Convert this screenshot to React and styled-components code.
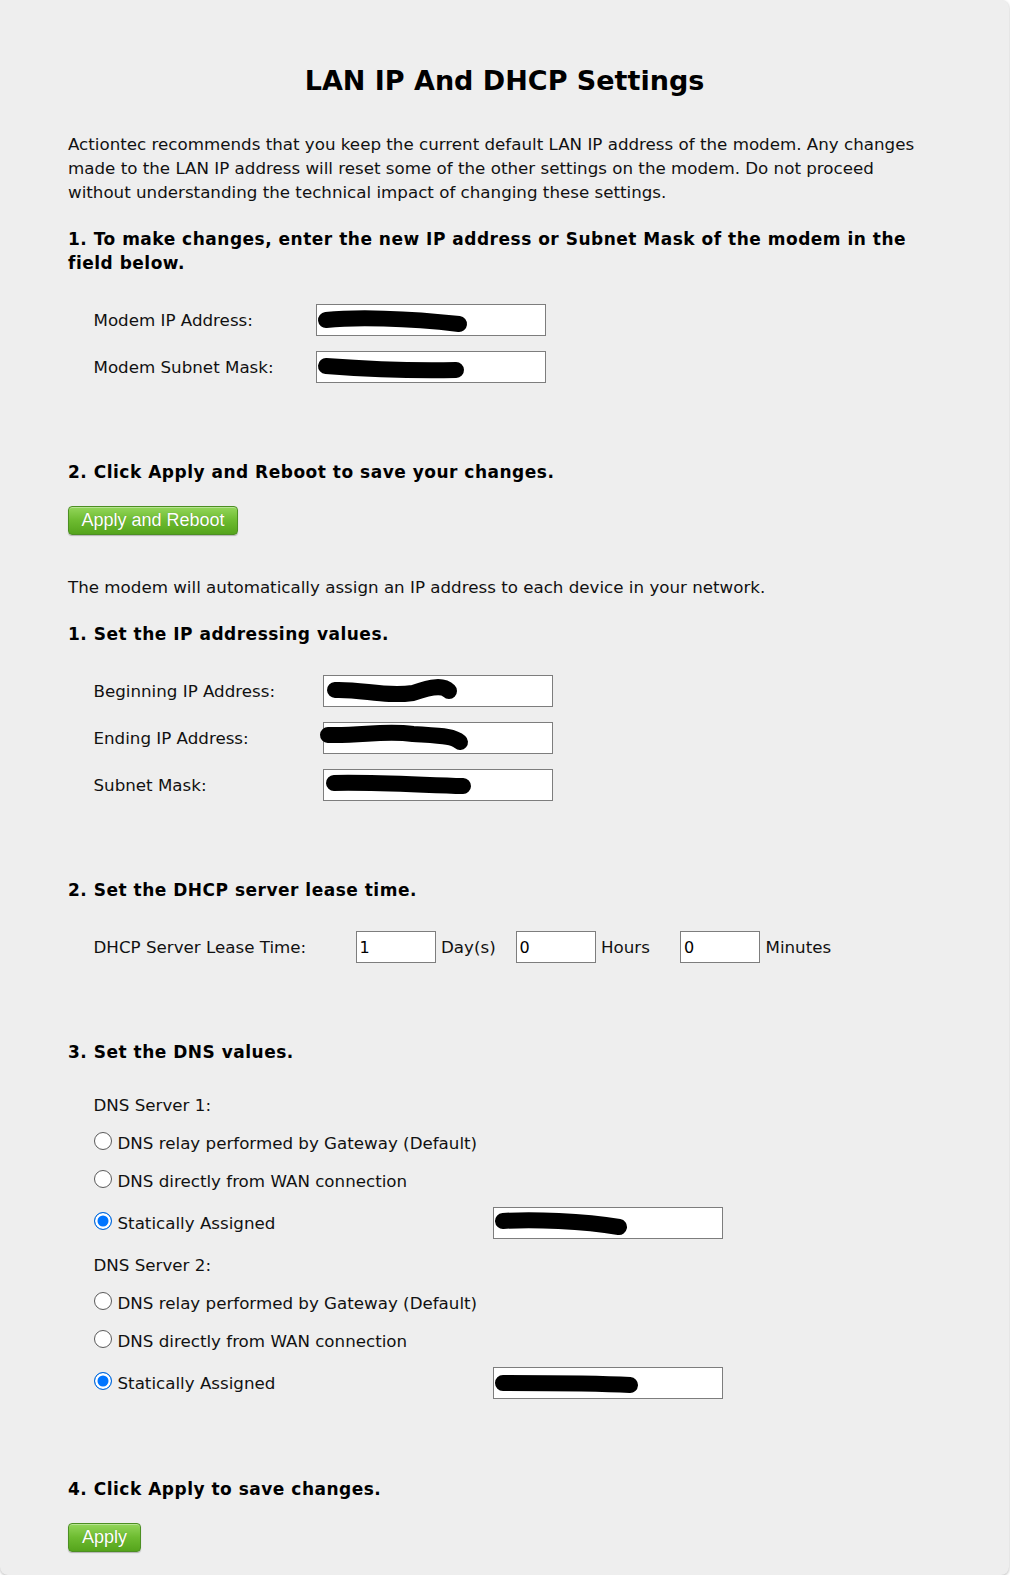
import styled, { createGlobalStyle } from 'styled-components'

const GlobalStyle = createGlobalStyle`
  body {
    margin: 0;
    background: #ffffff;
    font-family: "DejaVu Sans", Verdana, sans-serif;
  }
`

const Panel = styled.div`
  width: 1009px;
  box-sizing: border-box;
  padding: 65px 68px 23px 68px;
  background: #eeeeee;
  border-radius: 0 8px 8px 8px;
  box-shadow: 0 1px 3px rgba(0, 0, 0, 0.28);
  color: #111;
  font-size: 16.7px;
  line-height: 24px;
`

const Title = styled.h1`
  margin: 0;
  text-align: center;
  font-size: 27px;
  line-height: 32px;
  font-weight: bold;
  color: #000;
`

const Text = styled.p`
  max-width: 850px;
  margin: ${(props) => props.$top}px 0 0;
`

const StepHeading = styled.h3`
  max-width: 850px;
  margin: ${(props) => props.$top}px 0 0;
  font-size: 17px;
  letter-spacing: 0.5px;
  line-height: 24px;
  font-weight: bold;
  color: #000;
`

const FormGrid = styled.div`
  display: grid;
  grid-template-columns: ${(props) => props.$label}px 230px;
  row-gap: 15px;
  align-items: center;
  margin-top: ${(props) => props.$top}px;
  padding-left: 25.5px;
`

const FieldBox = styled.div`
  position: relative;
  width: ${(props) => props.$w || 230}px;
  height: 32px;
`

const Input = styled.input`
  width: 100%;
  height: 100%;
  box-sizing: border-box;
  margin: 0;
  padding: 0 3px;
  border: 1px solid #7d7d7d;
  background: #fff;
  font-family: "DejaVu Sans", Verdana, sans-serif;
  font-size: 16px;
  color: #000;
  outline: none;
`

const Scribble = styled.svg`
  position: absolute;
  top: 0;
  left: 0;
  pointer-events: none;
  overflow: visible;
`

const GreenButton = styled.button`
  display: block;
  margin-top: ${(props) => props.$top}px;
  height: 29px;
  padding: 0 ${(props) => props.$pad}px;
  border: 1px solid #4c8f22;
  border-radius: 4px;
  background: linear-gradient(to bottom, #93d65a 0%, #6dbb30 50%, #55a41c 100%);
  box-shadow: inset 0 1px 0 rgba(255, 255, 255, 0.35), 0 1px 1px rgba(0, 0, 0, 0.25);
  color: #fff;
  font-family: "Liberation Sans", Arial, sans-serif;
  font-size: 18px;
  line-height: 27px;
  text-shadow: 0 0 1px rgba(0, 0, 0, 0.25);
  cursor: pointer;
`

const LeaseRow = styled.div`
  display: flex;
  align-items: center;
  margin-top: ${(props) => props.$top}px;
  padding-left: 25.5px;
`

const LeaseLabel = styled.span`
  width: 262px;
`

const Unit = styled.span`
  box-sizing: border-box;
  width: ${(props) => props.$w}px;
  padding-left: 5.5px;
`

const DnsList = styled.div`
  display: flex;
  flex-direction: column;
  gap: 14px;
  margin-top: ${(props) => props.$top}px;
  padding-left: 25.5px;
`

const DnsLabel = styled.div`
  line-height: 24px;
`

const RadioRow = styled.label`
  display: flex;
  align-items: center;
  min-height: 24px;
`

const RadioText = styled.span`
  width: ${(props) => (props.$w ? `${props.$w}px` : 'auto')};
`

const Radio = styled.input.attrs({ type: 'radio' })`
  appearance: none;
  -webkit-appearance: none;
  box-sizing: border-box;
  width: 18px;
  height: 18px;
  margin: -5px 6px 0 0;
  border: 1px solid #5a5a5a;
  border-radius: 50%;
  background: #fff;
  flex: none;

  &:checked {
    border: 1.5px solid #0067d8;
    background: #0075ff;
    box-shadow: inset 0 0 0 2.5px #fff;
  }
`

function Redacted({ value, w = 230, blob }) {
  return (
    <FieldBox $w={w}>
      <Input type="text" defaultValue={value || ''} />
      {blob && (
        <Scribble width={w} height="32" viewBox={`0 0 ${w} 32`}>
          <path
            d={blob}
            fill="none"
            stroke="#000"
            strokeWidth="16"
            strokeLinecap="round"
            strokeLinejoin="round"
          />
        </Scribble>
      )}
    </FieldBox>
  )
}

const blobs = {
  modemIp: 'M10 16 C 40 13, 90 14, 143 20',
  modemMask: 'M10 15 C 50 18, 100 20, 140 19',
  begin: 'M12 15 C 40 14, 60 22, 90 18 C 110 11, 120 10, 126 16',
  end: 'M5 13 C 40 14, 60 8, 90 12 C 120 14, 130 14, 137 20',
  mask: 'M11 14 C 50 13, 100 16, 140 17',
  dns1: 'M10 14 C 40 12, 90 14, 126 20',
  dns2: 'M10 16 C 50 16, 100 16, 137 18',
}

function DnsServer({ index, blob }) {
  const name = `dns${index}`
  return (
    <>
      <DnsLabel>DNS Server {index}:</DnsLabel>
      <RadioRow>
        <Radio name={name} />
        <RadioText>DNS relay performed by Gateway (Default)</RadioText>
      </RadioRow>
      <RadioRow>
        <Radio name={name} />
        <RadioText>DNS directly from WAN connection</RadioText>
      </RadioRow>
      <RadioRow>
        <Radio name={name} defaultChecked />
        <RadioText $w={375}>Statically Assigned</RadioText>
        <Redacted blob={blob} />
      </RadioRow>
    </>
  )
}

function App() {
  return (
    <>
      <GlobalStyle />
      <Panel>
        <Title>LAN IP And DHCP Settings</Title>
        <Text $top={35.2}>
          Actiontec recommends that you keep the current default LAN IP address of the modem. Any
          changes made to the LAN IP address will reset some of the other settings on the modem. Do
          not proceed without understanding the technical impact of changing these settings.
        </Text>

        <StepHeading $top={23}>
          1. To make changes, enter the new IP address or Subnet Mask of the modem in the field
          below.
        </StepHeading>
        <FormGrid $label={222} $top={28.8}>
          <span>Modem IP Address:</span>
          <Redacted blob={blobs.modemIp} />
          <span>Modem Subnet Mask:</span>
          <Redacted blob={blobs.modemMask} />
        </FormGrid>

        <StepHeading $top={77.5}>2. Click Apply and Reboot to save your changes.</StepHeading>
        <GreenButton $top={22} $pad={12.5}>
          Apply and Reboot
        </GreenButton>

        <Text $top={40}>
          The modem will automatically assign an IP address to each device in your network.
        </Text>

        <StepHeading $top={22.5}>1. Set the IP addressing values.</StepHeading>
        <FormGrid $label={229} $top={29}>
          <span>Beginning IP Address:</span>
          <Redacted blob={blobs.begin} />
          <span>Ending IP Address:</span>
          <Redacted blob={blobs.end} />
          <span>Subnet Mask:</span>
          <Redacted blob={blobs.mask} />
        </FormGrid>

        <StepHeading $top={77.5}>2. Set the DHCP server lease time.</StepHeading>
        <LeaseRow $top={29}>
          <LeaseLabel>DHCP Server Lease Time:</LeaseLabel>
          <Redacted w={80} value="1" />
          <Unit $w={80}>Day(s)</Unit>
          <Redacted w={80} value="0" />
          <Unit $w={84.5}>Hours</Unit>
          <Redacted w={80} value="0" />
          <Unit $w={90}>Minutes</Unit>
        </LeaseRow>

        <StepHeading $top={77}>3. Set the DNS values.</StepHeading>
        <DnsList $top={28.7}>
          <DnsServer index={1} blob={blobs.dns1} />
          <DnsServer index={2} blob={blobs.dns2} />
        </DnsList>

        <StepHeading $top={78}>4. Click Apply to save changes.</StepHeading>
        <GreenButton $top={22} $pad={13}>
          Apply
        </GreenButton>
      </Panel>
    </>
  )
}

export default App
